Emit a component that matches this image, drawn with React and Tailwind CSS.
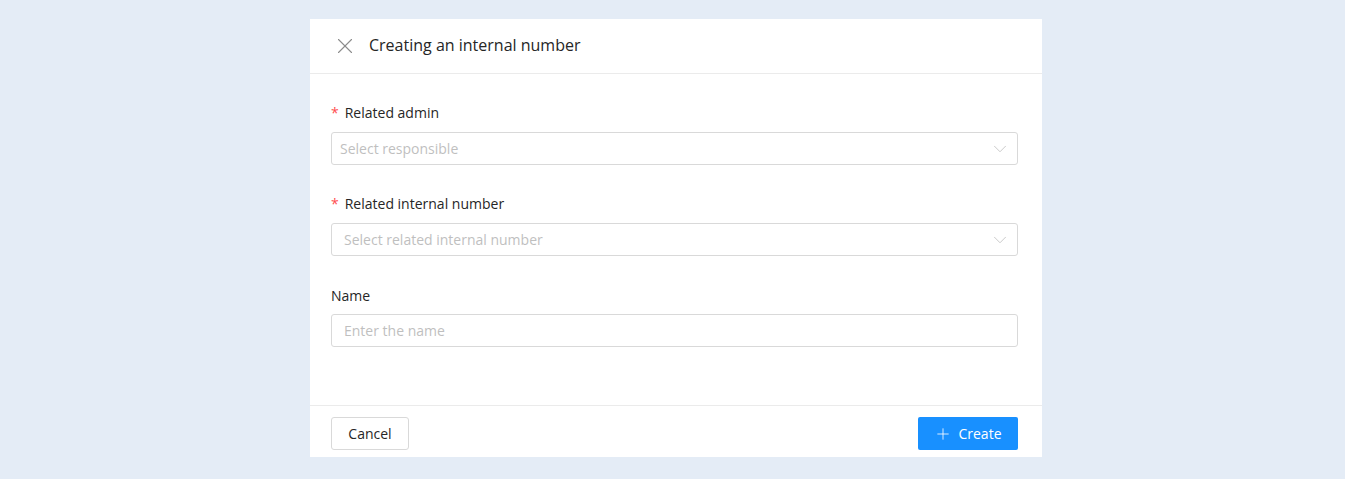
import { X, ChevronDown, Plus } from 'lucide-react'

const font = { fontFamily: '"Segoe UI", "Open Sans", "Noto Sans", sans-serif' }

function Label({ required, children }) {
  return (
    <div className="flex h-[22px] items-center text-[14px] text-[#262626]">
      {required && <span className="mr-[6px] mt-[2px] text-[14px] leading-none text-[#ff4d4f]">*</span>}
      {children}
    </div>
  )
}

function SelectBox({ placeholder, pad }) {
  return (
    <div className={`flex h-[33px] items-center justify-between rounded-[3px] border border-[#d9d9d9] bg-white ${pad} pr-[6px]`}>
      <span className="text-[14px] text-[#bfbfbf]">{placeholder}</span>
      <ChevronDown size={22} strokeWidth={0.9} className="text-[#bfbfbf]" />
    </div>
  )
}

export default function App() {
  return (
    <div className="flex h-[479px] w-full bg-[#e4ecf6] pl-[310px] pt-[19px]" style={font}>
      <div className="flex h-[438px] w-[732px] flex-col bg-white">
        <div className="flex h-[55px] items-center border-b border-[#ebebeb] pl-[22px]">
          <X size={26} strokeWidth={1} className="mb-[1px] text-[#8c8c8c]" />
          <span className="mb-[2px] ml-[11px] text-[16px] text-[#262626]">Creating an internal number</span>
        </div>

        <div className="flex flex-1 flex-col pl-[21px] pr-[24px] pt-[27px]">
          <Label required>Related admin</Label>
          <div className="mt-[9px]">
            <SelectBox placeholder="Select responsible" pad="pl-[8px]" />
          </div>

          <div className="mt-[27px]">
            <Label required>Related internal number</Label>
          </div>
          <div className="mt-[9px]">
            <SelectBox placeholder="Select related internal number" pad="pl-[12px]" />
          </div>

          <div className="mt-[28px]">
            <Label>Name</Label>
          </div>
          <div className="mt-[8px] flex h-[33px] items-center rounded-[3px] border border-[#d9d9d9] pl-[12px]">
            <span className="text-[14px] text-[#bfbfbf]">Enter the name</span>
          </div>
        </div>

        <div className="flex h-[52px] items-start justify-between border-t border-[#ebebeb] pl-[21px] pr-[24px] pt-[11px]">
          <button className="h-[33px] w-[78px] rounded-[3px] border border-[#d9d9d9] bg-white text-[14px] text-[#262626]">
            Cancel
          </button>
          <button className="flex h-[33px] w-[100px] items-center justify-center gap-[6px] rounded-[2px] bg-[#1890ff] text-[14px] text-white">
            <Plus size={18} strokeWidth={1.1} />
            Create
          </button>
        </div>
      </div>
    </div>
  )
}
